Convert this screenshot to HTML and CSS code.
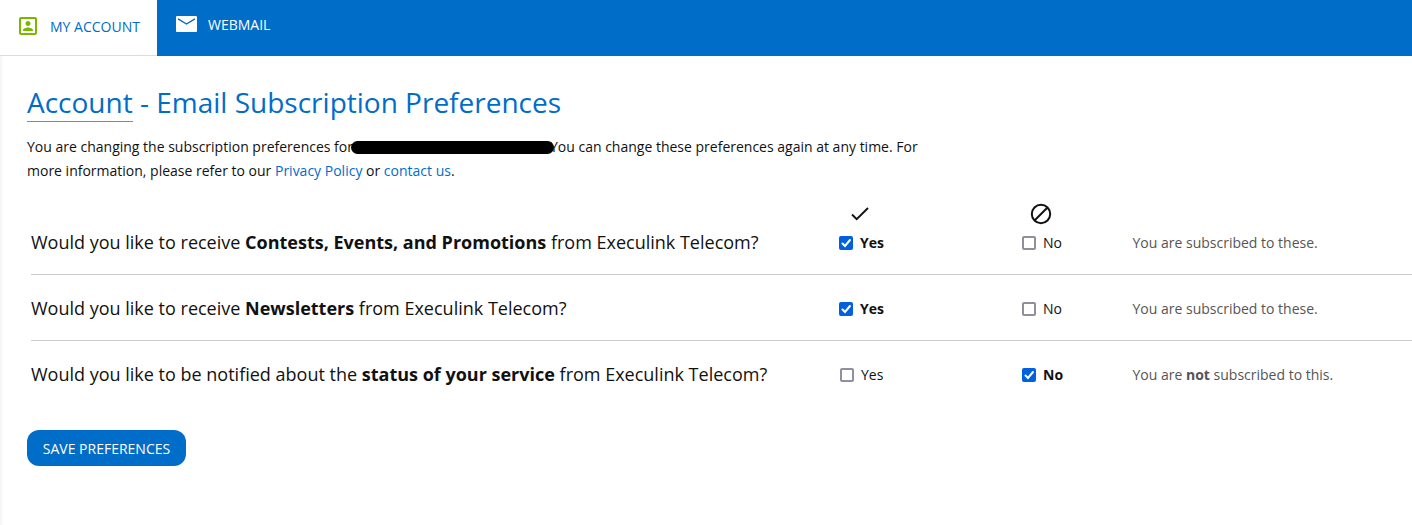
FILE: index.html
```html
<!DOCTYPE html>
<html lang="en">
<head>
  <meta charset="utf-8">
  <title>Email Subscription Preferences</title>
  <link rel="stylesheet" href="styles.css">
</head>
<body>
<nav class="topnav">
  <a class="tab active" href="#">
    <svg class="icon-account" width="24" height="24" viewBox="0 0 24 24" fill="#7ab800"><path d="M19 3H5a2 2 0 0 0-2 2v14a2 2 0 0 0 2 2h14a2 2 0 0 0 2-2V5a2 2 0 0 0-2-2zm0 16H5V5h14v14zM12 12c1.380 0 2.500-1.120 2.500-2.500S13.380 7 12 7 9.500 8.120 9.500 9.500 10.620 12 12 12zM17 17v-.8c0-1.700-3.300-2.700-5-2.700s-5 1-5 2.700v.8h10z"/></svg>
    <span>MY ACCOUNT</span>
  </a>
  <a class="tab webmail" href="#">
    <svg width="21" height="16" viewBox="0 0 21 16"><rect width="21" height="16" rx="1" fill="#fff"/><path d="M2 2.800l8.500 5.200L19 2.800" fill="none" stroke="#006dc9" stroke-width="1.400"/></svg>
    <span>WEBMAIL</span>
  </a>
</nav>
<main class="content">
  <h1><a href="#">Account</a> - Email Subscription Preferences</h1>
  <p class="intro">You are changing the subscription preferences for<span class="redacted"></span>You can change these preferences again at any time. For<br>more information, please refer to our <a href="#">Privacy Policy</a> or <a href="#">contact us</a>.</p>
  <form>
    <div class="row head">
      <span></span>
      <span class="mark"><svg width="18" height="14" viewBox="0 0 18 14"><path d="M1 7.500l4.700 4.700L17 1" fill="none" stroke="#111" stroke-width="1.900"/></svg></span>
      <span class="mark"><svg width="22" height="22" viewBox="0 0 22 22"><g fill="none" stroke="#111" stroke-width="2"><circle cx="11" cy="11" r="9.200"/><path d="M4.500 17.500l13-13"/></g></svg></span>
    </div>
    <div class="row">
      <span class="question">Would you like to receive <b>Contests, Events, and Promotions</b> from Execulink Telecom?</span>
      <label class="chosen"><input type="checkbox" checked>Yes</label>
      <label><input type="checkbox">No</label>
      <span class="status">You are subscribed to these.</span>
    </div>
    <div class="row">
      <span class="question">Would you like to receive <b>Newsletters</b> from Execulink Telecom?</span>
      <label class="chosen"><input type="checkbox" checked>Yes</label>
      <label><input type="checkbox">No</label>
      <span class="status">You are subscribed to these.</span>
    </div>
    <div class="row">
      <span class="question">Would you like to be notified about the <b>status of your service</b> from Execulink Telecom?</span>
      <label class="offset"><input type="checkbox">Yes</label>
      <label class="chosen"><input type="checkbox" checked>No</label>
      <span class="status">You are <b>not</b> subscribed to this.</span>
    </div>
    <button type="button">SAVE PREFERENCES</button>
  </form>
</main>
</body>
</html>
```
FILE: styles.css
```css
body {
  margin: 0;
  font-family: "Open Sans", sans-serif;
  font-size: 14px;
  color: #111;
  background: #fff;
  overflow: hidden;
}

a {
  color: #006dc9;
  text-decoration: none;
}

.topnav {
  display: flex;
  height: 56px;
  background: #006dc9;
}

.tab {
  display: flex;
  align-items: center;
  box-sizing: border-box;
  height: 56px;
}
.tab.active {
  width: 157px;
  padding: 0 0 3px 16px;
  background: #fff;
  border-bottom: 1px solid #ddd;
}
.tab.active span {
  margin: 0 0 0 10px;
}
.tab.webmail {
  padding: 0 0 8px 19px;
  color: #fff;
}
.tab.webmail span {
  margin: 0 0 0 11px;
}

.content {
  box-sizing: border-box;
  height: 469px;
  padding: 27px 0 0 27px;
  box-shadow: inset 4px 0 3px -2px #f4f4f4;
}

h1 {
  margin: 0;
  font-size: 28px;
  font-weight: 400;
  line-height: 39px;
  color: #006dc9;
}
h1 a {
  display: inline-block;
  border-bottom: 1px solid #888;
  line-height: 38px;
}

.intro {
  margin: 13px 0 0;
  line-height: 24px;
}

.redacted {
  display: inline-block;
  width: 203px;
  height: 13px;
  margin: 0 -4px 0 -2px;
  border-radius: 7px;
  background: #000;
  vertical-align: -2px;
}

.row {
  display: grid;
  grid-template-columns: 808px 183px 110.5px 1fr;
  align-items: center;
  height: 65px;
  margin-left: 4px;
  border-bottom: 1px solid #ccc;
}
.row.head {
  height: 22px;
  margin-top: 20px;
  border: 0;
}
.row.head + .row {
  height: 49px;
}
.row.head + .row > * {
  margin-top: -16px;
}
.row:last-of-type {
  border: 0;
}

.question {
  font-size: 18px;
}

.mark {
  display: flex;
  padding-left: 12px;
}
.mark + .mark {
  padding-left: 8px;
}

.row label {
  display: flex;
  align-items: center;
  padding-top: 2px;
}
.row .offset {
  padding-left: 1px;
}
.chosen {
  font-weight: bold;
}

input {
  appearance: none;
  box-sizing: border-box;
  width: 14px;
  height: 14px;
  margin: 0 7px 0 0;
  border: 2px solid #8f8f9d;
  border-radius: 2px;
}
input:checked {
  border: 0;
  background: #0061e0 url("data:image/svg+xml,%3Csvg xmlns='http://www.w3.org/2000/svg' viewBox='0 0 14 14'%3E%3Cpath d='M3.500 7.500l2.500 2.500 5-6' fill='none' stroke='white' stroke-width='2' stroke-linecap='round'/%3E%3C/svg%3E");
}

.status {
  padding-top: 2px;
  color: #555;
}

button {
  display: block;
  width: 159px;
  height: 36px;
  margin-top: 24px;
  padding: 0;
  border: 0;
  border-radius: 12px;
  background: #006dc9;
  color: #fff;
  font: 14px "Open Sans", sans-serif;
}
```
